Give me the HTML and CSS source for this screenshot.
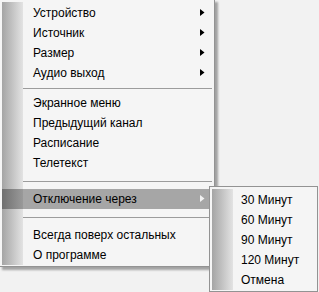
FILE: index.html
```html
<!DOCTYPE html>
<html lang="ru">
<head>
<meta charset="utf-8">
<link rel="stylesheet" href="styles.css">
</head>
<body>
<div class="menu main">
  <div class="inner">
    <div class="item"><span class="label">Устройство</span><svg class="arrow" width="5" height="7" viewBox="0 0 5 7"><polygon points="0,0 4.5,3.5 0,7"/></svg></div>
    <div class="item"><span class="label">Источник</span><svg class="arrow" width="5" height="7" viewBox="0 0 5 7"><polygon points="0,0 4.5,3.5 0,7"/></svg></div>
    <div class="item"><span class="label">Размер</span><svg class="arrow" width="5" height="7" viewBox="0 0 5 7"><polygon points="0,0 4.5,3.5 0,7"/></svg></div>
    <div class="item"><span class="label">Аудио выход</span><svg class="arrow" width="5" height="7" viewBox="0 0 5 7"><polygon points="0,0 4.5,3.5 0,7"/></svg></div>
    <div class="sep"></div>
    <div class="item"><span class="label">Экранное меню</span></div>
    <div class="item"><span class="label">Предыдущий канал</span></div>
    <div class="item"><span class="label">Расписание</span></div>
    <div class="item"><span class="label">Телетекст</span></div>
    <div class="sep tall"></div>
    <div class="item active"><span class="label">Отключение через</span><svg class="arrow" width="5" height="7" viewBox="0 0 5 7"><polygon points="0,0 4.5,3.5 0,7"/></svg></div>
    <div class="sep tall"></div>
    <div class="item"><span class="label">Всегда поверх остальных</span></div>
    <div class="item"><span class="label">О программе</span></div>
  </div>
</div>
<div class="menu sub">
  <div class="inner">
    <div class="item"><span class="label">30 Минут</span></div>
    <div class="item"><span class="label">60 Минут</span></div>
    <div class="item"><span class="label">90 Минут</span></div>
    <div class="item"><span class="label">120 Минут</span></div>
    <div class="item"><span class="label">Отмена</span></div>
  </div>
</div>
</body>
</html>
```

FILE: styles.css
```css
html, body {
  margin: 0;
  padding: 0;
}
body {
  background: #f2f2f2;
  width: 319px;
  height: 292px;
  overflow: hidden;
  position: relative;
  font-family: "Liberation Sans", Arial, sans-serif;
  font-size: 12px;
  color: #000;
}
.menu {
  background: #f5f5f5;
  border: 1px solid #939393;
  padding: 2px 1px 1px 2px;
  box-sizing: border-box;
}
.main {
  width: 216px;
  margin: -1px 0 0 -1px;
  box-shadow: 3px 3px 2px rgba(0, 0, 0, 0.33);
}
.sub {
  position: absolute;
  left: 209px;
  top: 186px;
  width: 109px;
}
.inner {
  padding-top: 1px;
  background: linear-gradient(to right, #a4a4a4 0, #e3e3e3 21px, #f5f5f5 21px);
}
.item {
  height: 20px;
  display: flex;
  align-items: center;
  padding-left: 31px;
  padding-right: 8px;
}
.sub .item {
  padding-left: 29px;
}
.label {
  flex: 1;
  white-space: nowrap;
}
.arrow {
  flex: none;
  fill: #000;
  margin-top: -2px;
}
.item.active {
  background: rgba(0, 0, 0, 0.32);
}
.item.active .arrow {
  fill: #f2f2f2;
}
.sep {
  height: 10px;
  display: flex;
  align-items: center;
  padding-left: 21px;
  padding-right: 1px;
}
.sep::after {
  content: "";
  flex: 1;
  height: 1px;
  background: #9c9c9c;
}
.sep.tall {
  height: 16px;
}
```
